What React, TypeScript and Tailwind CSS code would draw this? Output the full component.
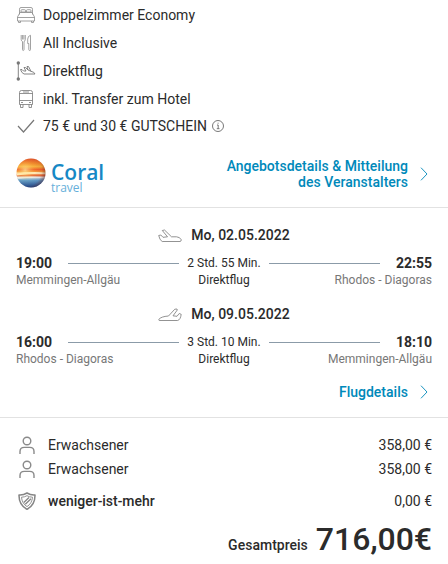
import type { ReactNode } from "react";

type Flight = {
    direction: "departure" | "return";
    date: string;
    start: string;
    end: string;
    from: string;
    to: string;
    duration: string;
};

const flights: Flight[] = [
    { direction: "departure", date: "Mo, 02.05.2022", start: "19:00", end: "22:55", from: "Memmingen-Allgäu", to: "Rhodos - Diagoras", duration: "2 Std. 55 Min." },
    { direction: "return", date: "Mo, 09.05.2022", start: "16:00", end: "18:10", from: "Rhodos - Diagoras", to: "Memmingen-Allgäu", duration: "3 Std. 10 Min." },
];

const travellers = [
    { label: "Erwachsener", price: "358,00 €" },
    { label: "Erwachsener", price: "358,00 €" },
];

function BedIcon() {
    return (
        <svg width="20" height="20" viewBox="0 0 20 20" fill="none" stroke="#8a8a8a" strokeWidth="0.8" strokeLinejoin="round">
            <path d="M3.5 9.5V4.2Q3.5 2.5 5 2.5H15Q16.5 2.5 16.5 4.2V9.5" />
            <path d="M5 7V5.5Q5 4.7 6 4.7H8.5Q9.5 4.7 9.5 5.5V7ZM10.5 7V5.5Q10.5 4.7 11.5 4.7H14Q15 4.7 15 5.5V7Z" />
            <path d="M4 7.5H16L18.5 12V16H1.5V12ZM1.5 12.5H18.5M2.5 16V17.5H4.5V16M15.5 16V17.5H17.5V16" />
        </svg>
    );
}

function CutleryIcon() {
    return (
        <svg width="20" height="20" viewBox="0 0 20 20" fill="none" stroke="#8a8a8a" strokeWidth="0.8" strokeLinejoin="round">
            <path d="M5.2 2V6.5Q5.2 8 6.5 8.5V16.5Q6.5 17.5 7.2 17.5T8 16.5V8.5Q9.3 8 9.3 6.5V2M6.6 2V6.5M7.9 2V6.5" />
            <path d="M14.5 2.3V16.5Q14.5 17.5 13.7 17.5T12.8 16.5V10.5H11.7V6Q12 2.8 14.5 2.3Z" />
        </svg>
    );
}

function DirectIcon() {
    return (
        <svg width="20" height="20" viewBox="0 0 20 20" fill="none" stroke="#777" strokeWidth="0.9" strokeLinejoin="round">
            <path d="M2.3 2V18" />
            <circle cx="2.3" cy="2" r="1.7" fill="#777" stroke="none" />
            <circle cx="2.3" cy="18" r="1.7" fill="#777" stroke="none" />
            <path d="M4.5 8.5 6 8.5 7.5 10 10 10 8 6.5 9.5 6.5 12 9 11 5.5 12.5 5.5 15 10.3Q18.5 11 19 13H8Q5.5 12 4.5 8.5ZM12 9 15 10.3" />
        </svg>
    );
}

function BusIcon() {
    return (
        <svg width="20" height="20" viewBox="0 0 20 20" fill="none" stroke="#777" strokeWidth="0.8" strokeLinejoin="round">
            <path d="M3.5 15.5V3.5Q3.5 1.5 5.5 1.5H14.5Q16.5 1.5 16.5 3.5V15.5ZM3.5 4.5H16.5M3.5 11.5H16.5M7 3H13M5 13.5H7M13 13.5H15" />
            <path d="M4.5 15.5V18.5H7V15.5M13 15.5V18.5H15.5V15.5" />
        </svg>
    );
}

function CheckIcon() {
    return (
        <svg width="20" height="20" viewBox="0 0 20 20" fill="none" stroke="#777" strokeWidth="1.2">
            <path d="M2 10 7.5 16 18 4" />
        </svg>
    );
}

function PlaneIcon({ direction }: { direction: Flight["direction"] }) {
    return (
        <svg width="24" height="16" viewBox="0 0 24 16" fill="none" stroke="#777" strokeWidth="0.8" strokeLinejoin="round">
            {direction === "departure" ? (
                <path d="M.7 8.5 2.8 8 5 10.3 9.5 9.8 4.3 3.5 6.5 3 13.5 9.8H18.5Q22 10 23.3 12.8 23.2 14.5 22 14.5H4.2Q1.8 13.5.7 8.5Z" />
            ) : (
                <path d="M.7 13.5Q3 10.5 10.5 10L16.8 3.2 19 3 19.3 4 15 9.8 19 10.3 21.2 7.5 23.2 8.3Q22.5 13.8 19.6 14.5H2Q.7 14.5.7 13.5Z" />
            )}
        </svg>
    );
}

function PersonIcon() {
    return (
        <svg width="22" height="20" viewBox="0 0 22 20" fill="none" stroke="#8a8a8a" strokeWidth="1.4">
            <circle cx="11" cy="6" r="3.8" />
            <path d="M4 19V16.5Q4 12.4 8.2 12.4H13.8Q18 12.4 18 16.5V19" />
        </svg>
    );
}

function ShieldIcon() {
    return (
        <svg width="22" height="20" viewBox="0 0 22 20" fill="none" stroke="#858585" strokeWidth="1.5" strokeLinejoin="round">
            <path d="M11 2Q14.5 4.3 19 4 19.2 14 11 18.3 2.8 14 3 4 7.5 4.3 11 2Z" />
            <path d="M11 4.7Q13.5 6.2 16.5 6.2 16 12.5 11 15.6 6 12.5 5.5 6.2 8.5 6.2 11 4.7Z" strokeWidth="0.9" />
            <path d="M7.8 11.5 13 6.5M9.3 13.3 15 7.8" strokeWidth="1.3" />
        </svg>
    );
}

function ChevronIcon() {
    return (
        <svg width="8" height="14" viewBox="0 0 8 14" fill="none" stroke="#0089ba" strokeWidth="0.9">
            <path d="M1 .7 7 7 1 13.3" />
        </svg>
    );
}

function CoralLogo() {
    return (
        <div className="flex items-center gap-[5px]">
            <svg width="30" height="34" viewBox="0 0 30 34" aria-hidden="true">
                <defs>
                    <linearGradient id="globe" x1="0" y1="0" x2="0" y2="1">
                        <stop offset="0" stopColor="#e0502b" />
                        <stop offset="0.18" stopColor="#f08a2c" />
                        <stop offset="0.28" stopColor="#f7b13d" />
                        <stop offset="0.38" stopColor="#f0602a" />
                        <stop offset="0.46" stopColor="#f39a3b" />
                        <stop offset="0.5" stopColor="#fff0bd" />
                        <stop offset="0.58" stopColor="#e8602a" />
                        <stop offset="0.65" stopColor="#d9e6ec" />
                        <stop offset="0.75" stopColor="#5aa0d4" />
                        <stop offset="1" stopColor="#15458e" />
                    </linearGradient>
                    <radialGradient id="shade" cx="0.3" cy="0.4" r="0.75">
                        <stop offset="0" stopColor="#fff2a8" stopOpacity="0.7" />
                        <stop offset="0.45" stopColor="#ffb940" stopOpacity="0.1" />
                        <stop offset="0.75" stopColor="#802818" stopOpacity="0.1" />
                        <stop offset="1" stopColor="#401c28" stopOpacity="0.6" />
                    </radialGradient>
                </defs>
                <circle cx="15" cy="16" r="14.5" fill="url(#globe)" />
                <path d="M1 16.5Q14 14 29 16L29 17Q15 16 1 18.5Z" fill="#fff3c9" />
                <path d="M1 20Q15 19 28 20L27.5 21Q14 20 2 22Z" fill="#fff" opacity="0.6" />
                <circle cx="15" cy="16" r="14.5" fill="url(#shade)" />
            </svg>
            <div className="pt-1 font-['Open_Sans',sans-serif]">
                <p className="text-[21px] leading-6 font-semibold text-[#1688c5]">Coral</p>
                <p className="text-xs leading-2 text-[#66afda]">travel</p>
            </div>
        </div>
    );
}

function Feature({ icon, children }: { icon: ReactNode; children: ReactNode }) {
    return (
        <li className="flex h-7 items-center gap-[7px] last:h-[26px]">
            {icon}
            <span className="flex items-center gap-1">{children}</span>
        </li>
    );
}

function FlightLeg({ flight }: { flight: Flight }) {
    return (
        <article>
            <h2 className="flex items-center justify-center gap-[9px] font-['Roboto_Medium',Roboto,sans-serif] text-sm leading-5 font-medium">
                <PlaneIcon direction={flight.direction} />
                {flight.date}
            </h2>
            <div className="mt-[9px] grid grid-cols-[1fr_auto_1fr] gap-2 text-xs leading-4">
                <div>
                    <div className="flex h-[18px] items-center gap-4">
                        <time className="text-sm font-bold">{flight.start}</time>
                        <span className="h-px flex-1 bg-[#8b9ba8]" />
                    </div>
                    <p className="text-[#777]">{flight.from}</p>
                </div>
                <div className="text-center">
                    <p className="leading-[18px]">{flight.duration}</p>
                    <p>Direktflug</p>
                </div>
                <div className="text-right">
                    <div className="flex h-[18px] items-center gap-4">
                        <span className="h-px flex-1 bg-[#8b9ba8]" />
                        <time className="text-sm font-bold">{flight.end}</time>
                    </div>
                    <p className="text-[#777]">{flight.to}</p>
                </div>
            </div>
        </article>
    );
}

export default function App() {
    return (
        <main className="bg-white font-[Roboto,sans-serif] text-sm text-[#2b2b2b]">
            <ul className="px-4 pt-px">
                <Feature icon={<BedIcon />}>Doppelzimmer Economy</Feature>
                <Feature icon={<CutleryIcon />}>All Inclusive</Feature>
                <Feature icon={<DirectIcon />}>Direktflug</Feature>
                <Feature icon={<BusIcon />}>inkl. Transfer zum Hotel</Feature>
                <Feature icon={<CheckIcon />}>
                    75 € und 30 € GUTSCHEIN
                    <button type="button" aria-label="Informationen zum Gutschein">
                        <svg width="14" height="14" viewBox="0 0 14 14" fill="none" stroke="#555" strokeWidth="0.8">
                            <circle cx="7" cy="7" r="5.5" />
                            <path d="M6 6H7.2V9.6M5.8 9.7H8.5M6.6 4.2H7.6" />
                        </svg>
                    </button>
                </Feature>
            </ul>

            <section className="flex items-center justify-between border-b border-[#e2e2e2] px-4 pt-[17px] pb-[15px]">
                <CoralLogo />
                <a href="#angebot" className="flex items-center gap-3 pr-1 text-right font-['Roboto_Medium',Roboto,sans-serif] leading-4 font-medium text-[#0089ba]">
                    <span>
                        Angebotsdetails &amp; Mitteilung
                        <br />
                        des Veranstalters
                    </span>
                    <ChevronIcon />
                </a>
            </section>

            <section className="border-b border-[#e2e2e2] px-4 pt-[17px] pb-[17px]">
                <div className="space-y-4">
                    {flights.map(flight => (
                        <FlightLeg key={flight.date} flight={flight} />
                    ))}
                </div>
                <a href="#flug" className="mt-[17px] ml-auto flex w-fit items-center gap-3 pr-1 font-['Roboto_Medium',Roboto,sans-serif] leading-4 font-medium text-[#0089ba]">
                    Flugdetails
                    <ChevronIcon />
                </a>
            </section>

            <section className="px-4 pt-[15px]">
                <ul>
                    {travellers.map((traveller, index) => (
                        <li key={index} className="flex h-6 items-center gap-[10px]">
                            <PersonIcon />
                            <span>{traveller.label}</span>
                            <span className="ml-auto">{traveller.price}</span>
                        </li>
                    ))}
                    <li className="mt-2 flex h-6 items-center gap-[10px]">
                        <ShieldIcon />
                        <span className="font-['Roboto_Medium',Roboto,sans-serif] font-medium">weniger-ist-mehr</span>
                        <span className="ml-auto">0,00 €</span>
                    </li>
                </ul>
                <p className="mt-2 flex items-baseline justify-end gap-2 font-['Roboto_Medium',Roboto,sans-serif] font-medium">
                    <span>Gesamtpreis</span>
                    <strong className="text-[32px] leading-9 font-medium">716,00€</strong>
                </p>
            </section>
        </main>
    );
}
